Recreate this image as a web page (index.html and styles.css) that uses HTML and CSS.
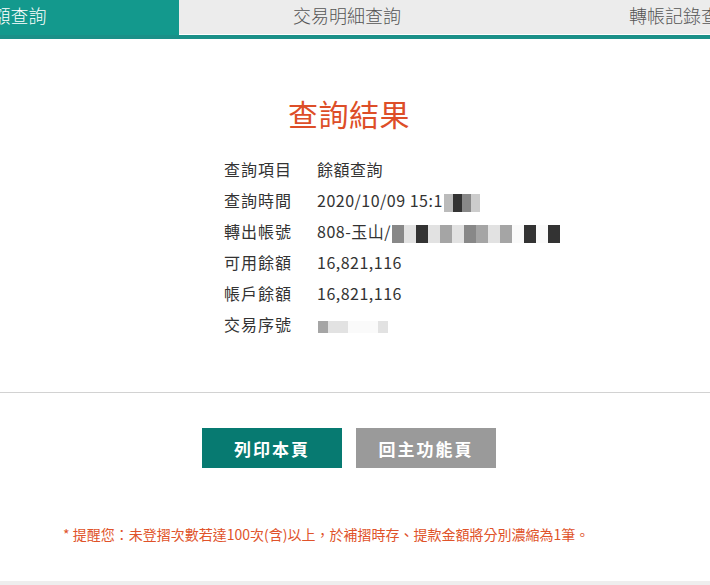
FILE: index.html
```html
<!DOCTYPE html>
<html lang="zh-Hant">
<head>
<meta charset="utf-8">
<title>查詢結果</title>
<link rel="stylesheet" href="styles.css">
</head>
<body>
<div class="tabbar">
  <div class="tabs">
    <div class="tab active">餘額查詢</div>
    <div class="tab">交易明細查詢</div>
    <div class="tab">轉帳記錄查詢</div>
  </div>
</div>
<main class="page">
  <h1 class="title">查詢結果</h1>
  <dl class="info">
    <div class="row"><dt>查詢項目</dt><dd>餘額查詢</dd></div>
    <div class="row"><dt>查詢時間</dt><dd>2020/10/09 15:1<span class="mask"><i class="m1"></i><i class="m2"></i><i class="m3"></i><i class="m4"></i></span></dd></div>
    <div class="row"><dt>轉出帳號</dt><dd>808-玉山/<span class="mask acct"><i class="m3"></i><i class="m5"></i><i class="m2"></i><i class="m5"></i><i class="m6"></i><i class="m5"></i><i class="m3"></i><i class="m6"></i><i class="m5"></i><i class="m6"></i><i class="m7"></i><i class="m2"></i><i class="m7"></i><i class="m2"></i></span></dd></div>
    <div class="row"><dt>可用餘額</dt><dd>16,821,116</dd></div>
    <div class="row"><dt>帳戶餘額</dt><dd>16,821,116</dd></div>
    <div class="row"><dt>交易序號</dt><dd><span class="mask seq"><i class="m6"></i><i class="m5"></i><i class="m5"></i><i class="m7"></i><i class="m7"></i><i class="m7"></i><i class="m5"></i></span></dd></div>
  </dl>
  <hr class="divider">
  <div class="actions">
    <button class="btn primary">列印本頁</button>
    <button class="btn secondary">回主功能頁</button>
  </div>
  <p class="notice">* 提醒您：未登摺次數若達100次(含)以上，於補摺時存、提款金額將分別濃縮為1筆。</p>
</main>
<footer class="footer"></footer>
</body>
</html>
```
FILE: styles.css
```css
html, body {
  margin: 0;
  padding: 0;
  background: #fff;
  overflow: hidden;
}
body {
  font-family: "Noto Sans CJK TC", "Noto Sans", sans-serif;
  color: #333;
}
.tabbar {
  width: 100%;
  overflow: hidden;
  border-bottom: 4px solid #1a9088;
}
.tabs {
  display: flex;
  margin-left: -158px;
  height: 35px;
}
.tab {
  flex: none;
  width: 336px;
  height: 34px;
  line-height: 30px;
  text-align: center;
  font-size: 18px;
  font-weight: 300;
  color: #555;
  background: #ececec;
  border-bottom: 1px solid #fff;
}
.tab.active {
  width: 337px;
  height: 35px;
  border: none;
  background: #13998d;
  color: #fff;
}
.page {
  width: 698px;
}
.title {
  margin: 56px 0 0;
  text-align: center;
  font-size: 30px;
  font-weight: normal;
  line-height: 36px;
  color: #dd4e28;
  letter-spacing: 0.5px;
}
.info {
  margin: 23px 0 0;
  padding-left: 224px;
}
.row {
  display: flex;
  height: 31px;
  line-height: 31px;
  font-size: 16px;
}
.row dt {
  width: 93px;
  flex: none;
  letter-spacing: 1px;
}
.row dd {
  margin: 0;
  letter-spacing: 0.5px;
}
.mask {
  display: inline-flex;
  vertical-align: middle;
  height: 18px;
  margin-left: 1px;
}
.mask i {
  display: block;
  width: 9px;
  height: 18px;
}
.mask.acct i { width: 12px; }
.mask.seq i { width: 10px; height: 12px; margin-top: 3px; }
.m1 { background: #bbb; }
.m2 { background: #333; }
.m3 { background: #888; }
.m4 { background: #ccc; }
.m5 { background: #e2e2e2; }
.m6 { background: #a5a5a5; }
.m7 { background: #fafafa; }
.divider {
  margin: 52px 0 0;
  width: 710px;
  border: none;
  border-top: 1px solid #d2d2d2;
  height: 0;
}
.actions {
  display: flex;
  justify-content: center;
  gap: 14px;
  margin-top: 35px;
}
.btn {
  width: 140px;
  height: 40px;
  border: none;
  color: #fff;
  font-family: "Noto Sans CJK TC", sans-serif;
  font-size: 17px;
  font-weight: bold;
  letter-spacing: 2px;
  padding: 0;
}
.btn.primary { background: #077a71; }
.btn.secondary { background: #9a9a9a; }
.notice {
  margin: 56px 0 0 63px;
  font-size: 14px;
  line-height: 20px;
  color: #e0532a;
}
.footer {
  margin-top: 37px;
  height: 10px;
  width: 710px;
  background: #eeeeee;
}
```
